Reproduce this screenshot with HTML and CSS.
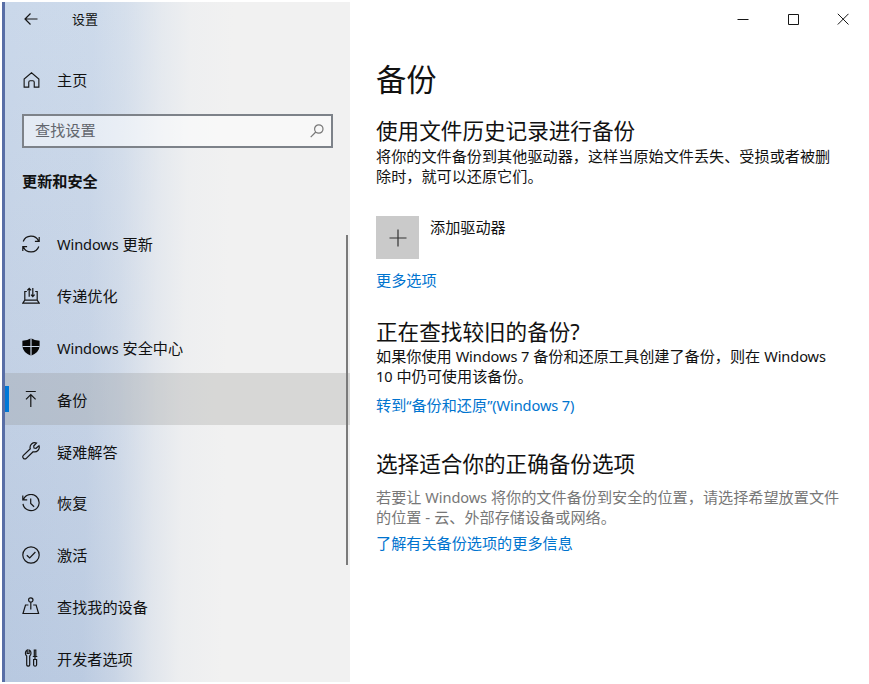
FILE: index.html
```html
<!DOCTYPE html>
<html lang="zh-CN">
<head>
<meta charset="utf-8">
<title>设置</title>
<link rel="stylesheet" href="styles.css">
</head>
<body>
<div class="window">
  <aside class="sidebar">
    <header class="topbar">
      <svg class="back" viewBox="0 0 14 14"><path d="M13.500 7H1M6.500 1.500 1 7l5.500 5.500"/></svg>
      <span>设置</span>
    </header>
    <div class="home">
      <svg class="icon" viewBox="0 0 18 18"><path d="M1.200 8v8.500h4.900v-5.200q0-1.500 1.500-1.500h2.800q1.500 0 1.500 1.500v5.200h4.900V8L9 1.300z"/></svg>
      <span>主页</span>
    </div>
    <div class="search">
      <span>查找设置</span>
      <svg class="magnifier" viewBox="0 0 14 14"><circle cx="8.800" cy="5" r="4.200"/><path d="M5.800 8 .7 13.200"/></svg>
    </div>
    <h2 class="category">更新和安全</h2>
    <nav class="nav">
      <a class="item"><svg class="icon" viewBox="0 0 18 18"><path d="M1.200 6.500A8.300 8.300 0 0 1 16.600 6M16.800 11.500A8.300 8.300 0 0 1 1.400 12M17.200 2v4.300h-4.300M.8 16v-4.300h4.300"/></svg><span><i>Windows</i> 更新</span></a>
      <a class="item"><svg class="icon" viewBox="0 0 18 18"><path d="M4.800 4.500H2.800v8.700h12.400V4.500h-2M2.800 13.200.8 16.200h16.400l-2-3M7.200 9.800V1.500M5.300 3.400l1.900-2 1.900 2M10.800 1v8.500M9 7.600l1.800 2 1.800-2"/></svg><span>传递优化</span></a>
      <a class="item"><svg class="icon" viewBox="0 0 18 18"><path class="solid" d="M9 .2Q5.600 2.500.4 2.800V8q.3 6.300 8.600 9.800Q17.300 14.300 17.600 8V2.800Q12.400 2.500 9 .2z"/><path class="cut" d="M9 0v18M.5 8.500h17"/></svg><span><i>Windows</i> 安全中心</span></a>
      <a class="item selected"><svg class="icon" viewBox="0 0 18 18"><path d="M3.800 1.500h10M8.800 17V4.500M4 9.300l4.800-4.800 4.800 4.800"/></svg><span>备份</span></a>
      <a class="item"><svg class="icon" viewBox="0 0 18 18"><path d="M14.500 1A4.700 4.700 0 0 0 8.300 6.800L1.400 13.400a1.900 1.900 0 0 0 0 2.900 1.900 1.900 0 0 0 2.900 0l6.800-6.600A4.700 4.700 0 0 0 17 3.700l-3 2.600-2-.3-.3-2z"/></svg><span>疑难解答</span></a>
      <a class="item"><svg class="icon" viewBox="0 0 18 18"><path d="M1.500 5.500A8.100 8.100 0 1 1 1 9.800M.8 1.500v4.300h4.400M8.700 4.500v5l3.400 3.200"/></svg><span>恢复</span></a>
      <a class="item"><svg class="icon" viewBox="0 0 18 18"><circle cx="9" cy="9" r="8.200"/><path d="m4.800 9.200 2.900 2.800L13.400 6"/></svg><span>激活</span></a>
      <a class="item"><svg class="icon" viewBox="0 0 18 18"><circle cx="8.800" cy="3" r="2.200"/><path d="M8.800 5.200v7.300M6.400 8H3.500L1 16.500h15.600L14.100 8h-2.900"/></svg><span>查找我的设备</span></a>
      <a class="item"><svg class="icon" viewBox="0 0 18 18"><path d="M5.200 1v3.500h1.900V1Q9 1.800 9 4T7.700 7v9q-.3 1.200-1.500 1.200T4.700 16V7Q3.400 6 3.400 4t1.800-3zM12.300 1h1.500v6.500h-1.500zM10.800 7.500h4.500M13 7.500v3M11.600 10.500h3V16q-.2 1.200-1.500 1.200T11.600 16z"/></svg><span>开发者选项</span></a>
    </nav>
    <div class="scrollbar"></div>
  </aside>
  <main class="content">
    <div class="controls">
      <svg viewBox="0 0 12 12"><path d="M.5 6.500h11"/></svg>
      <svg viewBox="0 0 12 12"><path d="M1.500 1.500h10v10h-10z"/></svg>
      <svg viewBox="0 0 12 12"><path d="m.8.800 10.700 10.700M11.500.8.800 11.500"/></svg>
    </div>
    <h1>备份</h1>
    <section class="history">
      <h2>使用文件历史记录进行备份</h2>
      <p>将你的文件备份到其他驱动器，这样当原始文件丢失、受损或者被删<br>除时，就可以还原它们。</p>
      <div class="drive">
        <div class="add"><svg viewBox="0 0 18 18"><path d="M9 .5v17M.5 9h17"/></svg></div>
        <span>添加驱动器</span>
      </div>
      <a class="link">更多选项</a>
    </section>
    <section class="older">
      <h2>正在查找较旧的备份<b>?</b></h2>
      <p>如果你使用 <i>Windows 7</i> 备份和还原工具创建了备份，则在 <i>Windows</i><br><i>10</i> 中仍可使用该备份。</p>
      <a class="link">转到<i>“</i>备份和还原<i>”(Windows 7)</i></a>
    </section>
    <section class="choose">
      <h2>选择适合你的正确备份选项</h2>
      <p>若要让 <i>Windows</i> 将你的文件备份到安全的位置，请选择希望放置文件<br>的位置 - 云、外部存储设备或网络。</p>
      <a class="link">了解有关备份选项的更多信息</a>
    </section>
  </main>
</div>
</body>
</html>
```
FILE: styles.css
```css
* { box-sizing: border-box; }
body {
  margin: 0;
  background: #fff;
  color: #111;
  font: 15.15px/20px "Noto Sans", "Noto Sans CJK SC", sans-serif;
  white-space: nowrap;
}
h1, h2, p { margin: 0; font-weight: 400; }
i, b { font-style: normal; font-weight: 400; }
i { font-size: 14.6px; letter-spacing: -0.1px; }
svg { display: block; fill: none; stroke: #161616; stroke-width: 1.2; flex: none; }

.window { display: flex; width: 869px; height: 684px; padding: 2px 0 2px 2px; overflow: hidden; }
.sidebar {
  position: relative;
  width: 348px;
  height: 680px;
  overflow: hidden;
  border-left: 3px solid #586ea6;
  background:
    linear-gradient(91deg, rgba(241, 241, 241, 0) 0%, rgba(241, 241, 241, .08) 25%, rgba(241, 241, 241, .3) 34%, rgba(241, 241, 241, .7) 44%, rgba(241, 241, 241, .92) 52%, #f1f1f1 64%),
    linear-gradient(180deg, #cad8ea 0%, #c3d1e5 50%, #b7c8e0 100%);
}
.topbar { display: flex; align-items: center; gap: 34px; height: 35px; padding-left: 19px; font-size: 13px; }
.topbar span { margin-top: -1px; }
.back { width: 14px; height: 14px; margin-top: -2px; }
.icon { width: 18px; height: 18px; }
.home { display: flex; align-items: center; gap: 17px; height: 20px; margin-top: 33px; padding-left: 18px; }
.home .icon { width: 17px; }
.search {
  display: flex;
  align-items: center;
  justify-content: space-between;
  width: 311px;
  height: 34px;
  margin: 24px 0 0 17px;
  padding: 0 7px 2px 11px;
  border: 2px solid #7d8289;
  background: rgba(255, 255, 255, .5);
  color: #62666d;
}
.magnifier { width: 14px; height: 14px; stroke: #777; margin-top: 2px; }
.category { margin: 23px 0 0 17px; font-size: 15.15px; line-height: 20px; font-weight: 700; }
.nav { margin-top: 27px; }
.item { position: relative; display: flex; align-items: center; gap: 17px; height: 51.8px; padding-left: 17px; }
.item span { padding-top: 1px; }
.selected { background: rgba(140, 140, 135, .25); }
.selected::before { content: ""; position: absolute; left: 0; top: 13px; width: 4px; height: 26px; background: #0078d7; }
.solid { fill: #080808; stroke: none; }
.cut { stroke: #c6d3e5; }
.scrollbar { position: absolute; left: 341px; top: 233px; width: 2px; height: 330px; background: #7b7b7b; }

.content { flex: 1; padding-left: 26px; }
.controls { display: flex; justify-content: flex-end; gap: 38px; height: 33px; align-items: center; padding-right: 20px; }
.controls svg { width: 12px; height: 12px; stroke-width: 1; }
h1 { margin-top: 24px; font-size: 30.3px; line-height: 42px; }
.content h2 { font-size: 21.6px; line-height: 28px; }
.history { margin-top: 16px; }
.history p { margin-top: 1px; }
.drive { display: flex; gap: 11px; height: 43px; margin-top: 30px; }
.drive span { padding-top: 1px; }
.add { display: flex; align-items: center; justify-content: center; width: 43px; height: 43px; background: #cacaca; }
.add svg { width: 18px; height: 18px; stroke: #333; }
.link { display: block; color: #0074cf; }
.history .link { margin-top: 11px; }
.older { margin-top: 28px; }
.older .link { margin-top: 9px; }
.choose { margin-top: 35px; }
.choose p { margin-top: 9px; color: #777; }
.choose .link { margin-top: 6px; }
```
